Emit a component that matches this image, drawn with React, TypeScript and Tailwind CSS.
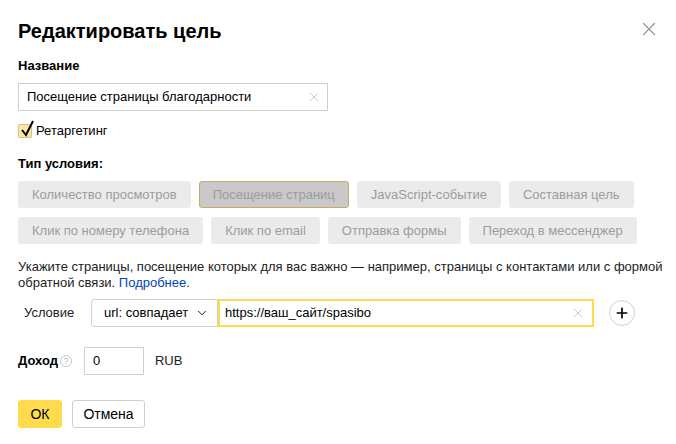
import { X, ChevronDown, Plus } from "lucide-react";

const row1 = ["Количество просмотров", "Посещение страниц", "JavaScript-событие", "Составная цель"];
const row2 = ["Клик по номеру телефона", "Клик по email", "Отправка формы", "Переход в мессенджер"];

function TypeButton({ label, active }: { label: string; active?: boolean }) {
  return (
    <div
      className={
        active
          ? "h-[27px] px-[13px] flex items-center rounded-[3px] border border-[#c4ad66] bg-[#c9c9c9] text-[#9c9c9c]"
          : "h-[27px] px-[14px] flex items-center rounded-[3px] bg-[#ebebeb] text-[#9c9c9c]"
      }
    >
      {label}
    </div>
  );
}

export default function App() {
  return (
    <div
      className="w-[676px] h-[444px] bg-white relative text-[13px] text-black"
      style={{ fontFamily: '"Liberation Sans", Arial, sans-serif' }}
    >
      <button className="absolute top-[18px] right-[16px] text-[#9a9a9a]">
        <X size={22} strokeWidth={1.5} />
      </button>

      <div className="pl-[18px] pt-[19px] pr-[10px]">
        <h1 className="text-[20px] font-bold leading-[24px]">Редактировать цель</h1>

        <div className="mt-[15px] font-bold leading-[16px]">Название</div>
        <div className="mt-[9px] w-[310px] h-[28px] border border-[#d0d0d0] flex items-center pl-[8px] pr-[6px]">
          <span className="flex-1">Посещение страницы благодарности</span>
          <X size={14} strokeWidth={1.2} className="text-[#b3b3b3]" />
        </div>

        <div className="mt-[12px] flex items-center h-[16px]">
          <div className="relative w-[14px] h-[14px] rounded-[2px] border border-[#d8c274] bg-[#fbe7a5]">
            <svg className="absolute left-[1px] top-[-5px]" width="15" height="17" viewBox="0 0 15 17">
              <path d="M2 10 L6 15 L13 1" fill="none" stroke="#000" strokeWidth="2" />
            </svg>
          </div>
          <span className="ml-[4px]">Ретаргетинг</span>
        </div>

        <div className="mt-[17px] font-bold leading-[16px]">Тип условия:</div>
        <div className="mt-[9px] flex gap-[8px]">
          {row1.map((l, i) => (
            <TypeButton key={l} label={l} active={i === 1} />
          ))}
        </div>
        <div className="mt-[9px] flex gap-[8px]">
          {row2.map((l) => (
            <TypeButton key={l} label={l} />
          ))}
        </div>

        <p className="mt-[15px] leading-[16px] text-[#222]">
          Укажите страницы, посещение которых для вас важно — например, страницы с контактами или с формой обратной
          связи. <span className="text-[#0044bb]">Подробнее</span>.
        </p>

        <div className="mt-[8px] flex items-center">
          <span className="w-[73px] pl-[6px] text-[#222]">Условие</span>
          <div className="h-[28px] w-[127px] border border-[#d0d0d0] rounded-l-[3px] flex items-center pl-[12px] pr-[8px] justify-between">
            <span>url: совпадает</span>
            <ChevronDown size={14} strokeWidth={1.5} />
          </div>
          <div className="h-[28px] w-[376px] border-2 border-[#ffdb4d] flex items-center pl-[5px] pr-[7px]">
            <span className="flex-1">https://ваш_сайт/spasibo</span>
            <X size={14} strokeWidth={1.2} className="text-[#b3b3b3]" />
          </div>
          <div className="ml-[15px] w-[26px] h-[26px] rounded-full border border-[#cfcfcf] flex items-center justify-center">
            <Plus size={16} strokeWidth={2.5} />
          </div>
        </div>

        <div className="mt-[20px] flex items-center">
          <span className="font-bold">Доход</span>
          <span className="ml-[2px] w-[12px] h-[12px] rounded-full border border-[#c8c8c8] text-[#b8b8b8] text-[9px] leading-none flex items-center justify-center">
            ?
          </span>
          <div className="ml-[12px] w-[60px] h-[28px] border border-[#d0d0d0] flex items-center pl-[8px]">0</div>
          <span className="ml-[11px] text-[#222]">RUB</span>
        </div>

        <div className="mt-[25px] flex gap-[10px]">
          <button className="h-[28px] w-[44px] rounded-[3px] bg-[#ffdb4d] text-[14px]">ОК</button>
          <button className="h-[28px] w-[73px] rounded-[3px] border border-[#d0d0d0] bg-white text-[14px]">Отмена</button>
        </div>
      </div>
    </div>
  );
}
